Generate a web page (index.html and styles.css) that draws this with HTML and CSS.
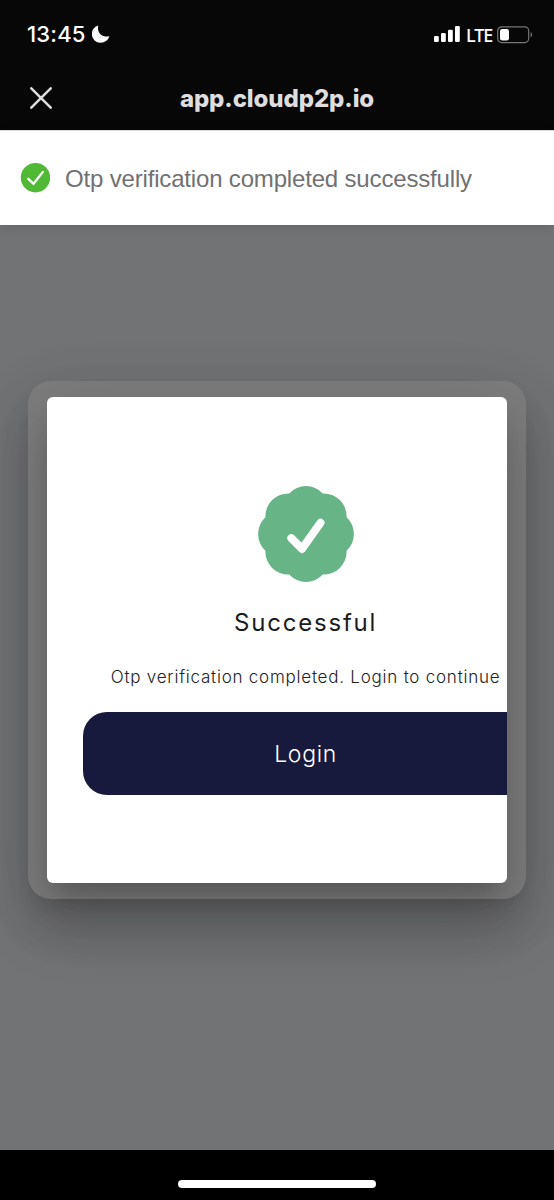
FILE: index.html
```html
<!DOCTYPE html>
<html lang="en">
<head>
<meta charset="utf-8">
<title>app.cloudp2p.io</title>
<link rel="stylesheet" href="styles.css">
</head>
<body>
<div class="screen">
  <header class="top">
    <div class="status">
      <span class="time">13:45</span>
      <svg class="moon" width="18" height="18" viewBox="0 0 18 18"><path d="M6.3 .4C4.6 7.5 9.6 13.2 17.4 10.9A8.9 8.9 0 1 1 6.3 .4Z" fill="#fff"/></svg>
      <svg class="signal" width="26" height="16" viewBox="0 0 26 16" fill="#fff"><rect x="0" y="10" width="4.8" height="6" rx="1.3"/><rect x="7" y="7" width="4.8" height="9" rx="1.3"/><rect x="14" y="3.7" width="4.8" height="12.3" rx="1.3"/><rect x="21" y="0" width="4.8" height="16" rx="1.3"/></svg>
      <span class="network">LTE</span>
      <svg class="battery" width="36" height="18" viewBox="0 0 36 18"><rect x=".7" y=".8" width="31" height="15.8" rx="4" fill="none" stroke="#777" stroke-width="1.2"/><rect x="3" y="3" width="9" height="11.4" rx="2.2" fill="#fff"/><path d="M33.7 5.8Q36.6 8.7 33.7 11.6Z" fill="#777"/></svg>
    </div>
    <div class="nav">
      <svg class="close" width="22" height="22" viewBox="0 0 22 22"><path d="M1.3 1.3 20.7 20.7M20.7 1.3 1.3 20.7" stroke="#dedede" stroke-width="2.5" stroke-linecap="round"/></svg>
      <span class="host">app.cloudp2p.io</span>
    </div>
  </header>
  <div class="toast">
    <svg class="toast-icon" width="30" height="30" viewBox="0 0 30 30"><circle cx="15.5" cy="14.7" r="14.7" fill="#50b936"/><path d="M8.3 15.8 13.5 20.8 22.9 8.9" fill="none" stroke="#fff" stroke-width="2.3" stroke-linecap="round"/></svg>
    <span class="toast-text">Otp verification completed successfully</span>
  </div>
  <main class="backdrop">
    <div class="frame">
      <section class="dialog">
        <div class="content">
          <svg class="badge" width="96" height="96" viewBox="-48 -48 96 96"><path d="M-16.8-40.6A23 23 0 0 1 16.8-40.6A23 23 0 0 1 40.6-16.8A23 23 0 0 1 40.6 16.8A23 23 0 0 1 16.8 40.6A23 23 0 0 1-16.8 40.6A23 23 0 0 1-40.6 16.8A23 23 0 0 1-40.6-16.8A23 23 0 0 1-16.8-40.6Z" fill="#67b587"/><path d="M-14.7 4.2-4 14.9 14.5-11.2" fill="none" stroke="#fff" stroke-width="8" stroke-linecap="round" stroke-linejoin="round"/></svg>
          <h1 class="title">Successful</h1>
          <p class="message">Otp verification completed. Login to continue</p>
          <button class="login">Login</button>
        </div>
      </section>
    </div>
  </main>
  <footer class="bottom"><div class="home"></div></footer>
</div>
</body>
</html>
```
FILE: styles.css
```css
* { box-sizing: border-box; }
body { margin: 0; background: #000; }
svg { display: block; flex: none; }
.screen { display: flex; flex-direction: column; width: 554px; height: 1200px; overflow: hidden; }
.top { height: 130px; flex: none; background: #070707; color: #fff; }
.status { height: 68px; padding: 0 21px 0 27px; display: flex; align-items: center; font-family: Inter, sans-serif; }
.time { font-size: 22px; font-weight: 500; letter-spacing: .2px; width: 65px; }
.signal { margin-left: auto; }
.network { width: 31px; font: 500 18px/24px "Noto Sans", sans-serif; margin: 1px 0 0 6px; letter-spacing: -1.1px; }
.battery { margin-top: 1px; }
.nav { height: 60px; padding: 0 30px; display: grid; grid-template-columns: 22px 1fr 22px; align-items: center; }
.host { text-align: center; color: #dedede; font: 800 24px/30px Inter, sans-serif; letter-spacing: -.1px; padding-top: 2px; }
.toast { height: 95px; flex: none; background: #fff; border-top: 1px solid #ddd; padding: 0 20px 1px; display: flex; align-items: center; gap: 15px; box-shadow: 0 2px 10px rgba(0,0,0,.12); position: relative; }
.toast-text { color: #717173; font: 24px/30px "Liberation Sans", Arial, sans-serif; letter-spacing: -.17px; white-space: nowrap; padding-top: 2px; }
.backdrop { flex: 1; background: #727375; padding: 156px 28px 0; }
.frame { height: 518px; padding: 16px 19px; border-radius: 23px; background: #7d7d7d; box-shadow: 0 15px 21px -10px rgba(0,0,0,.12), 0 34px 54px 4px rgba(0,0,0,.1), 0 13px 65px 11px rgba(0,0,0,.04); }
.dialog { width: 460px; height: 486px; overflow: hidden; border-radius: 6px; background: #fff; box-shadow: 0 15px 21px -10px rgba(0,0,0,.2), 0 34px 54px 4px rgba(0,0,0,.12), 0 13px 65px 11px rgba(0,0,0,.08); }
.content { width: 446px; margin-left: 35.6px; padding-top: 89px; display: flex; flex-direction: column; align-items: center; }
.title { margin: 23px 0 0; font: 400 24px/36px Inter, sans-serif; letter-spacing: 1.8px; color: #1c1c1c; }
.message { margin: 24px 0 0; font: 300 17px/24px Inter, sans-serif; letter-spacing: .77px; white-space: nowrap; color: #222; }
.login { width: 100%; height: 83px; margin-top: 23px; border: 0; border-radius: 24px; background: #17193d; color: #fff; font: 300 23px/30px Inter, sans-serif; letter-spacing: .7px; }
.bottom { height: 50px; flex: none; background: #000; display: flex; justify-content: center; padding-top: 30px; }
.home { width: 198px; height: 8px; border-radius: 4px; background: #fff; }
```
